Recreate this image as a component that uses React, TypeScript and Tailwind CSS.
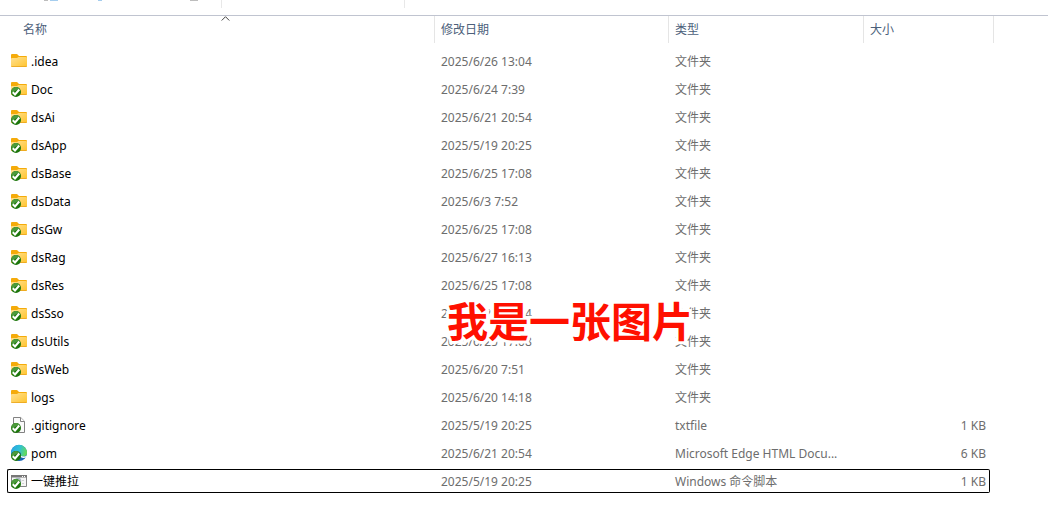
import React from "react";

type Kind = "folder" | "file" | "edge" | "script";

interface Entry {
  name: string;
  modified: string;
  type: string;
  size?: string;
  kind: Kind;
  synced: boolean;
  focused?: boolean;
}

const folder = (name: string, modified: string, synced = true): Entry => ({
  name,
  modified,
  type: "文件夹",
  kind: "folder",
  synced,
});

const entries: Entry[] = [
  folder(".idea", "2025/6/26 13:04", false),
  folder("Doc", "2025/6/24 7:39"),
  folder("dsAi", "2025/6/21 20:54"),
  folder("dsApp", "2025/5/19 20:25"),
  folder("dsBase", "2025/6/25 17:08"),
  folder("dsData", "2025/6/3 7:52"),
  folder("dsGw", "2025/6/25 17:08"),
  folder("dsRag", "2025/6/27 16:13"),
  folder("dsRes", "2025/6/25 17:08"),
  folder("dsSso", "2025/6/21 20:54"),
  folder("dsUtils", "2025/6/25 17:08"),
  folder("dsWeb", "2025/6/20 7:51"),
  folder("logs", "2025/6/20 14:18", false),
  { name: ".gitignore", modified: "2025/5/19 20:25", type: "txtfile", size: "1 KB", kind: "file", synced: true },
  { name: "pom", modified: "2025/6/21 20:54", type: "Microsoft Edge HTML Docu...", size: "6 KB", kind: "edge", synced: true },
  { name: "一键推拉", modified: "2025/5/19 20:25", type: "Windows 命令脚本", size: "1 KB", kind: "script", synced: true, focused: true },
];

function IconGradients() {
  return (
    <svg className="absolute size-0" aria-hidden="true">
      <defs>
        <linearGradient id="folderFront" x1="0" y1="0" x2="1" y2="1">
          <stop offset="0" stopColor="#ffe192" />
          <stop offset="1" stopColor="#ffc42e" />
        </linearGradient>
        <linearGradient id="edgeSwirl" x1="0" y1="0.3" x2="1" y2="0.5">
          <stop offset="0" stopColor="#2aa5e0" />
          <stop offset="0.5" stopColor="#2fc0d8" />
          <stop offset="1" stopColor="#66dc55" />
        </linearGradient>
      </defs>
    </svg>
  );
}

function EntryIcon({ kind, synced }: { kind: Kind; synced: boolean }) {
  return (
    <svg className="size-4 shrink-0 overflow-visible" viewBox="0 0 16 16" aria-hidden="true">
      {kind === "folder" && (
        <>
          <path d="M0 2a1 1 0 0 1 1-1h4.6q.6 0 1 .5L8 3h7a1 1 0 0 1 1 1v5H0z" fill="#f5ab0a" />
          <path d="M0 6q0-1 1-1h5l1.500-1H15q1 0 1 1v8q0 1-1 1H1q-1 0-1-1z" fill="url(#folderFront)" />
          <path d="M0 12.700q.2 1.300 1 1.300h14q.8 0 1-1.300-.3.500-1 .500H1q-.7 0-1-.500z" fill="#e9a31b" />
        </>
      )}
      {kind === "file" && (
        <>
          <path d="M2.500.5h7.200l3.800 3.800v11.200h-11z" fill="#fafafa" stroke="#828282" />
          <path d="M9.500.5v4h4" fill="#fff" stroke="#828282" />
        </>
      )}
      {kind === "edge" && (
        <>
          <circle cx="8" cy="8" r="8" fill="#1460b4" />
          <path d="M0 8a8 8 0 0 1 16-.5c.2 2.600-1.600 4-3.800 4-2 0-3-.7-2.600-1.400.9-1.400.2-3.500-2.500-3.700C4 6 1 7 0 9z" fill="url(#edgeSwirl)" />
          <path d="M9 11c1.500 2.500 4 2.300 6.500 1.200L16 10.500c-1.500 1.200-4.500 1.500-6.400.3z" fill="#fff" />
        </>
      )}
      {kind === "script" && (
        <>
          <path d="M.5 2.500h15v11H.5z" fill="#f6f6f6" stroke="#858585" />
          <path d="M0 2h16v2.500H0z" fill="#777" />
          <path d="M11 3h1v1h-1zM13 3h1v1h-1z" fill="#fff" />
          <circle cx="7" cy="8" r="2.500" fill="none" stroke="#a9b7c2" strokeWidth="1.500" />
          <path d="M11 7h2v1h-2zM11 10h2v1h-2z" fill="#d2d2d2" />
        </>
      )}
      {synced && (
        <>
          <circle cx="5" cy="11" r="5" fill="#1c760b" />
          <path d="M.6 8.700A5 5 0 0 1 9 8Q4 9 .6 13z" fill="#4c9a3c" />
          <path d="M1.800 11.200l2.200 2.300 4.300-5" fill="none" stroke="#fff" strokeWidth="2" />
        </>
      )}
    </svg>
  );
}

const columns = ["名称", "修改日期", "类型", "大小"];

export default function App() {
  return (
    <main className="relative min-h-screen overflow-hidden bg-white font-['Noto_Sans','Noto_Sans_CJK_SC',sans-serif] text-xs text-[#6d6d6d]">
      <IconGradients />
      <header className="flex h-4 items-start border-b border-[#c0c4d0]" aria-hidden="true">
        <div className="flex h-2 w-[222px] border-r border-[#e8e8e8] pl-11">
          <span className="h-px w-1 bg-[#bdbdbd]" />
          <span className="ml-0.5 h-px w-2 bg-[#a5cdee]" />
          <span className="ml-10 h-px w-1 bg-[#a5cdee]" />
          <span className="ml-22 h-px w-2 bg-[#bdbdbd]" />
        </div>
        <div className="h-2 w-[183px] border-r border-[#e8e8e8]" />
      </header>

      <table className="w-full table-fixed border-separate border-spacing-0 text-left">
        <colgroup>
          <col className="w-[435px]" />
          <col className="w-[234px]" />
          <col className="w-[195px]" />
          <col className="w-[130px]" />
          <col />
        </colgroup>
        <thead className="text-[#4c607a]">
          <tr>
            {columns.map((label, i) => (
              <th
                key={label}
                scope="col"
                aria-sort={i === 0 ? "ascending" : undefined}
                className={`relative h-[27px] border-r border-[#e5e5e5] p-0 pt-px font-normal ${i === 0 ? "pl-[23px]" : "pl-1.5"}`}
              >
                {label}
                {i === 0 && (
                  <svg className="absolute top-0 left-[221px] h-[5px] w-[9px]" viewBox="0 0 9 5" aria-hidden="true">
                    <path d="M.7 4.500l3.800-3.800 3.800 3.800" fill="none" stroke="#444" />
                  </svg>
                )}
              </th>
            ))}
            <td className="p-0" />
          </tr>
          <tr aria-hidden="true">
            <td colSpan={5} className="h-1 p-0" />
          </tr>
        </thead>
        <tbody>
          {entries.map((entry) => {
            const edge = entry.focused ? "border-black" : "border-transparent";
            return (
              <tr key={entry.name} className="h-7">
                <td className="p-0">
                  <div className={`ml-[7px] flex h-6 items-center gap-1 rounded-l-xs border-y border-l pl-[3px] text-black ${edge}`}>
                    <EntryIcon kind={entry.kind} synced={entry.synced} />
                    <span className="pt-0.5">{entry.name}</span>
                  </div>
                </td>
                <td className="p-0">
                  <div className={`flex h-6 items-center border-y pt-0.5 pl-1.5 ${edge}`}>{entry.modified}</div>
                </td>
                <td className="p-0">
                  <div className={`flex h-6 items-center border-y pt-0.5 pl-1.5 whitespace-nowrap ${edge}`}>{entry.type}</div>
                </td>
                <td className="p-0">
                  <div className={`mr-1 flex h-6 items-center justify-end rounded-r-xs border-y border-r pt-0.5 pr-[3px] ${edge}`}>
                    {entry.size}
                  </div>
                </td>
                <td className="p-0" />
              </tr>
            );
          })}
        </tbody>
      </table>

      <p className="pointer-events-none absolute top-[293px] left-[447px] text-[41px] leading-[56px] font-bold whitespace-nowrap text-[#ff1000] [-webkit-text-stroke:6px_white] [paint-order:stroke_fill]">
        我是一张图片
      </p>
    </main>
  );
}
